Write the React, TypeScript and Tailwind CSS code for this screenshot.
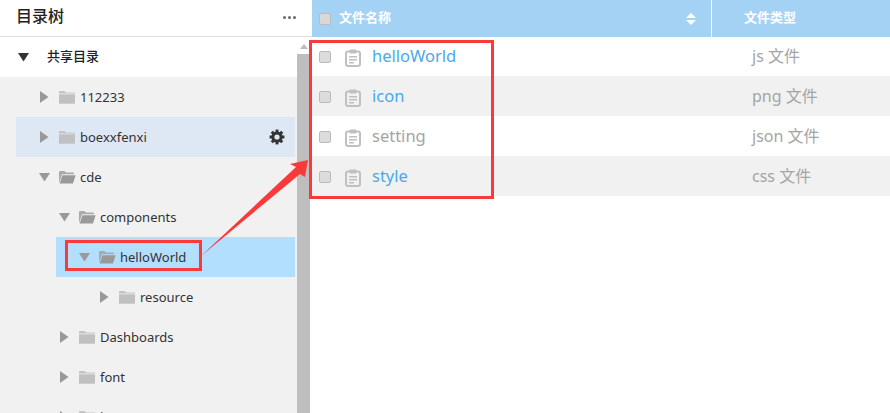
import React from "react";

const font = { fontFamily: '"Noto Sans", "Noto Sans CJK SC", sans-serif' };

function Caret({ open, dark, className = "" }: { open?: boolean; dark?: boolean; className?: string }) {
  const fill = dark ? "#333" : "#999";
  return open ? (
    <svg width="11" height="10" viewBox="0 0 11 10" className={"shrink-0 " + className}>
      <polygon points="0,1 11,1 5.5,9.5" fill={fill} />
    </svg>
  ) : (
    <svg width="11" height="12" viewBox="0 0 11 12" className={"shrink-0 " + className}>
      <polygon points="1,0 9.5,6 1,12" fill={fill} />
    </svg>
  );
}

function Folder({ open }: { open?: boolean }) {
  return open ? (
    <svg width="18" height="14" viewBox="0 0 18 14" className="shrink-0">
      <path d="M1 13V2.2Q1 1 2.2 1H6.5L8 2.5H15Q16 2.5 16 3.5V4.3H4L1 13Z" fill="#aaa" />
      <path d="M4.4 5.3H17.6L15 13.4H1.6Z" fill="#999" />
    </svg>
  ) : (
    <svg width="18" height="14" viewBox="0 0 18 14" className="shrink-0">
      <path d="M1 3.5V1.8Q1 1 1.8 1H6.5L8 2.5H17V3.5Z" fill="#c4c4c4" />
      <rect x="1" y="4.3" width="16" height="9.4" fill="#c0c0c0" />
    </svg>
  );
}

function Gear() {
  return (
    <svg width="16" height="16" viewBox="0 0 16 16" className="shrink-0">
      <g fill="#333">
        <circle cx="8" cy="8" r="5.6" />
        {[0, 45, 90, 135, 180, 225, 270, 315].map((a) => (
          <rect key={a} x="6.5" y="0.6" width="3" height="3.2" transform={`rotate(${a} 8 8)`} />
        ))}
      </g>
      <circle cx="8" cy="8" r="2.6" fill="#dde8f4" />
    </svg>
  );
}

function TreeRow({
  label,
  indent,
  open,
  bg = "",
  gear,
}: {
  label: string;
  indent: string;
  open?: boolean;
  bg?: string;
  gear?: boolean;
}) {
  return (
    <div className={"h-10 flex items-center shrink-0 " + indent}>
      <div className={"h-10 flex-1 flex items-center " + bg}>
        <Caret open={open} className="ml-[23px]" />
        <div className="ml-[8px] flex items-center">
          <Folder open={open} />
        </div>
        <span className="ml-[4px] mt-[1px] text-[13px] text-[#333]">{label}</span>
        {gear && (
          <span className="ml-auto mr-[10px] flex">
            <Gear />
          </span>
        )}
      </div>
    </div>
  );
}

function Doc() {
  return (
    <svg width="16" height="18" viewBox="0 0 16 18" className="shrink-0">
      <rect x="1" y="2.5" width="14" height="14.5" rx="2" fill="none" stroke="#c0c0c0" strokeWidth="2" />
      <rect x="4.5" y="0.5" width="7" height="4" rx="1" fill="#c0c0c0" />
      <rect x="4" y="7" width="8" height="1.5" fill="#c0c0c0" />
      <rect x="4" y="10" width="8" height="1.5" fill="#c0c0c0" />
      <rect x="4" y="13" width="5" height="1.5" fill="#c0c0c0" />
    </svg>
  );
}

function Check({ header }: { header?: boolean }) {
  return (
    <span
      className={
        "block w-[12px] h-[12px] rounded-[2px] border border-[#bbb] shrink-0 " +
        (header ? "bg-[#d8d8d8]" : "bg-[#dcdcdc]")
      }
    />
  );
}

const files = [
  { n: "helloWorld", t: "js 文件", c: "text-[#4ba9e8]", h: "h-[39px] bg-white", o: "mb-[1px]", k: "", d: "translate-y-[1px]" },
  { n: "icon", t: "png 文件", c: "text-[#4ba9e8]", h: "h-10 bg-[#f1f1f1]", o: "", k: "translate-y-[1px]", d: "translate-y-[2px]" },
  { n: "setting", t: "json 文件", c: "text-[#a5a5a5]", h: "h-10 bg-white", o: "", k: "translate-y-[1px]", d: "translate-y-[2px]" },
  { n: "style", t: "css 文件", c: "text-[#4ba9e8]", h: "h-10 bg-[#f1f1f1]", o: "", k: "translate-y-[1px]", d: "translate-y-[2px]" },
];

export default function App() {
  return (
    <div className="relative w-[890px] h-[413px] overflow-hidden bg-white flex" style={font}>
      <aside className="w-[312px] h-full flex flex-col shrink-0">
        <div className="h-[37px] shrink-0 border-b border-[#ddd] flex items-center pl-[16px] pr-[16px] pb-[5px]">
          <span className="text-[16px] font-medium text-[#222]">目录树</span>
          <span className="ml-auto mt-[3px] flex gap-[2px]">
            <i className="block w-[3px] h-[3px] rounded-full bg-[#667]" />
            <i className="block w-[3px] h-[3px] rounded-full bg-[#667]" />
            <i className="block w-[3px] h-[3px] rounded-full bg-[#667]" />
          </span>
        </div>
        <div className="flex-1 flex min-h-0">
          <div className="flex-1 min-w-0 flex flex-col overflow-hidden">
            <div className="h-10 shrink-0 flex items-center pl-[18px] w-[295px]">
              <Caret open dark />
              <span className="ml-[18px] text-[13px] font-medium text-[#222]">共享目录</span>
            </div>
            <div className="flex-1 bg-[#f1f1f1] flex flex-col pr-[2px] overflow-hidden">
              <TreeRow label="112233" indent="pl-[16px]" />
              <TreeRow label="boexxfenxi" indent="pl-[16px]" bg="bg-[#dde8f4]" gear />
              <TreeRow label="cde" indent="pl-[16px]" open />
              <TreeRow label="components" indent="pl-[36px]" open />
              <TreeRow label="helloWorld" indent="pl-[56px]" open bg="bg-[#b3dfff]" />
              <TreeRow label="resource" indent="pl-[76px]" />
              <TreeRow label="Dashboards" indent="pl-[36px]" />
              <TreeRow label="font" indent="pl-[36px]" />
              <TreeRow label="images" indent="pl-[36px]" />
            </div>
          </div>
          <div className="w-[13px] shrink-0 flex flex-col bg-white">
            <div className="h-[17px] flex items-center justify-center pt-[1px]">
              <svg width="8" height="5" viewBox="0 0 8 5">
                <polygon points="4,0 8,5 0,5" fill="#bdbdbd" />
              </svg>
            </div>
            <div className="flex-1 bg-[#bebebe]" />
          </div>
          <div className="w-[2px] shrink-0 bg-white" />
        </div>
      </aside>
      <main className="flex-1 min-w-0 flex flex-col">
        <div className="h-[37px] shrink-0 bg-[#a3d2f5] flex items-center text-[13px] font-bold text-white">
          <div className="w-[400px] h-full flex items-center border-r border-white pl-[7px] pr-[15px]">
            <Check header />
            <span className="ml-[8px] mb-[1px]">文件名称</span>
            <svg width="10" height="12" viewBox="0 0 10 12" className="ml-auto">
              <polygon points="5,0 10,5 0,5" fill="#fff" />
              <polygon points="0,7 10,7 5,12" fill="#fff" />
            </svg>
          </div>
          <span className="ml-[32px] mb-[1px]">文件类型</span>
        </div>
        {files.map((f) => (
          <div key={f.n} className={"flex items-center shrink-0 text-[16.5px] " + f.h}>
            <div className="w-[400px] flex items-center pl-[7px]">
              <span className={"flex " + f.k}>
                <Check />
              </span>
              <span className={"ml-[14px] flex " + f.d}>
                <Doc />
              </span>
              <span className={"ml-[11px] " + f.c + " " + f.o}>{f.n}</span>
            </div>
            <span className={"ml-[40px] text-[16px] text-[#a5a5a5] " + f.o}>{f.t}</span>
          </div>
        ))}
      </main>
      <div className="absolute left-[309px] top-[40px] w-[185px] h-[159px] border-[3px] border-[#fa3a3a]" />
      <div className="absolute left-[65px] top-[240px] w-[137px] h-[31px] border-[3px] border-[#fa3a3a]" />
      <svg className="absolute left-[195px] top-[150px]" width="120" height="120" viewBox="0 0 120 120">
        <polygon points="6,106 101,17 95,14 113,10 110,27 105,24" fill="#fa3a3a" />
      </svg>
    </div>
  );
}
